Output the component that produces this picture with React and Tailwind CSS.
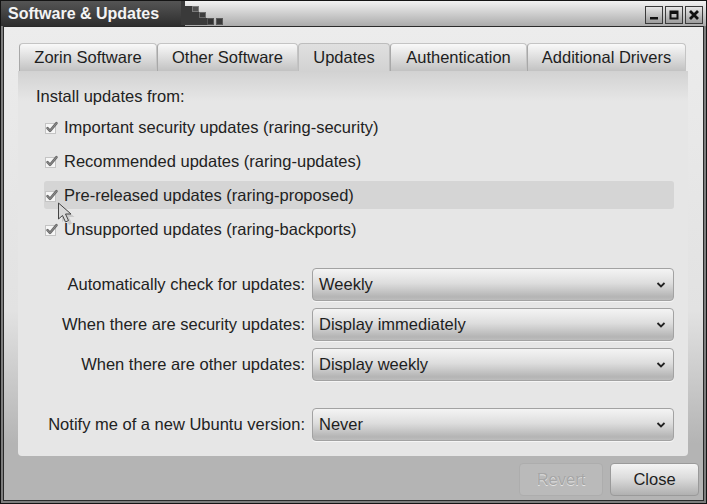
import { useState } from 'react'

const tabs = [
  { label: 'Zorin Software', w: 'w-[138px]' },
  { label: 'Other Software', w: 'w-[141px]' },
  { label: 'Updates', w: 'w-[92px]', active: true },
  { label: 'Authentication', w: 'w-[137px]' },
  { label: 'Additional Drivers', w: 'w-[159px]' },
]

const sources = [
  'Important security updates (raring-security)',
  'Recommended updates (raring-updates)',
  'Pre-released updates (raring-proposed)',
  'Unsupported updates (raring-backports)',
]

function Check() {
  return (
    <svg width="16" height="14" viewBox="0 0 16 14" className="shrink-0">
      <rect x="1.5" y="3.5" width="10" height="10" fill="#f6f6f6" stroke="#c4c4c4" />
      <path d="M3.5 8.2 L6 10.8 L12.5 3.2" fill="none" stroke="#6a6a6a" strokeWidth="2.6" strokeLinecap="round" strokeLinejoin="round" />
      <path d="M3.5 8.2 L6 10.8 L12.5 3.2" fill="none" stroke="#8e8e8e" strokeWidth="1" strokeLinecap="round" strokeLinejoin="round" />
    </svg>
  )
}

function Combo({ value }) {
  return (
    <div className="flex-1 h-[33px] rounded-[4px] border border-[#a2a2a2] bg-[linear-gradient(to_bottom,#f4f4f4_0%,#dedede_45%,#b4b4b4_90%,#bdbdbd_100%)] shadow-[0_1px_0_rgba(255,255,255,0.6)] flex items-center justify-between pl-[6px] pr-[7px] text-[#1e1e1e]">
      <span>{value}</span>
      <svg width="10" height="8" viewBox="0 0 10 8">
        <path d="M1.5 2 L5 5.5 L8.5 2" fill="none" stroke="#222" strokeWidth="1.8" />
      </svg>
    </div>
  )
}

function WinButton({ children }) {
  return (
    <div className="w-[18px] h-[18px] border border-[#3a3a3a] bg-[linear-gradient(to_bottom,#e6e6e6,#9c9c9c)] flex items-center justify-center">
      <svg width="12" height="12" viewBox="0 0 12 12">{children}</svg>
    </div>
  )
}

export default function App() {
  const [checked] = useState([true, true, true, true])
  const [tab] = useState(2)

  return (
    <div className="w-[707px] h-[504px] bg-[#141414] p-px flex flex-col font-['Liberation_Sans',Arial,sans-serif] text-[16.5px] text-[#222] select-none">
      {/* title bar */}
      <div className="h-[25px] relative flex items-center bg-[linear-gradient(to_bottom,#f2f2f2,#ababab)]">
        <div className="absolute left-0 top-0 bottom-0 w-[184px] bg-[linear-gradient(to_bottom,#555,#2e2e2e)]" />
        <svg className="absolute left-[180px] top-0" width="48" height="25" viewBox="0 0 48 25">
          <path d="M0 0 H4 V5 H11 V11 H18 V17 H26 V24 H0 Z" fill="#3a3a3a" />
          <rect x="11" y="5" width="7" height="6" fill="#7a7a7a" />
          <rect x="12" y="6" width="5" height="4" fill="#505050" />
          <rect x="18" y="11" width="7" height="6" fill="#6a6a6a" />
          <rect x="19" y="12" width="5" height="4" fill="#3c3c3c" />
          <rect x="26" y="17" width="7" height="7" fill="#555" />
          <rect x="27" y="18" width="5" height="5" fill="#333" />
          <rect x="35" y="17" width="7" height="7" fill="#5a5a5a" />
          <rect x="36" y="18" width="5" height="5" fill="#3a3a3a" />
        </svg>
        <span className="relative pl-[7px] font-bold text-[16px] text-[#f4f4f4]">Software &amp; Updates</span>
        <div className="ml-auto relative flex gap-[2px] pr-[3px] pt-[2px]">
          <WinButton>
            <rect x="2" y="8" width="8" height="2.5" fill="#111" />
          </WinButton>
          <WinButton>
            <rect x="2.5" y="2.5" width="7" height="7" fill="none" stroke="#111" strokeWidth="2" />
            <rect x="2" y="2" width="8" height="3" fill="#111" />
          </WinButton>
          <WinButton>
            <path d="M2 2 L10 10 M10 2 L2 10" stroke="#111" strokeWidth="2.8" />
          </WinButton>
        </div>
      </div>

      {/* window body */}
      <div className="flex-1 bg-[#7d7d7d] px-[2px] pb-[2px] flex flex-col">
        <div className="flex-1 border border-[#2a2a2a] bg-[linear-gradient(to_bottom,#ececec_0%,#e2e2e2_60%,#b4b4b4_88%,#b4b4b4_100%)] flex flex-col pt-[16px] pl-[14px] pr-[3px] pb-[3px]">
          {/* tabs */}
          <div className="flex h-[28px] pl-px">
            {tabs.map((t, i) => (
              <div
                key={t.label}
                className={`${t.w} h-full flex items-center justify-center pb-px rounded-t-[4px] border border-b-0 ${
                  i === tab
                    ? 'bg-[linear-gradient(to_bottom,#e0e0e0,#d2d2d2)] border-[#bdbdbd]'
                    : 'bg-[linear-gradient(to_bottom,#f9f9f9,#c2c2c2)] border-[#c4c4c4] border-l-[#a8a8a8]'
                } text-[#1e1e1e]`}
              >
                {t.label}
              </div>
            ))}
          </div>

          {/* panel */}
          <div className="w-[670px] h-[385px] rounded-b-[4px] bg-[linear-gradient(to_bottom,#d2d2d2_0px,#e6e6e6_30px,#e6e6e6_100%)] pt-[15px] pl-[18px] pr-[14px] flex flex-col">
            <div className="h-[20px] leading-[20px] text-[#222]">Install updates from:</div>
            <div className="flex flex-col gap-[6px] mt-[7px] ml-[8px]">
              {sources.map((s, i) => (
                <div
                  key={s}
                  className={`h-[28px] flex items-center gap-[4px] rounded-[3px] relative ${i === 2 ? 'bg-[#d5d5d5]' : ''}`}
                >
                  {checked[i] && <Check />}
                  <span>{s}</span>
                  {i === 2 && (
                    <svg className="absolute left-[13px] top-[21px]" width="20" height="24" viewBox="0 0 20 24">
                      <path d="M3 2 L3 18 L7 14.5 L10 21 L13 19.5 L10 13 L15.5 13 Z" fill="rgba(0,0,0,0.12)" transform="translate(2 2)" />
                      <path d="M1.5 1 L1.5 17 L5.5 13.5 L8.5 20 L11.5 18.5 L8.5 12 L14 12 Z" fill="#d8d8d8" stroke="#444" strokeWidth="1" strokeLinejoin="round" />
                    </svg>
                  )}
                </div>
              ))}
            </div>

            <div className="flex flex-col gap-[7px] mt-[25px]">
              {[
                ['Automatically check for updates:', 'Weekly'],
                ['When there are security updates:', 'Display immediately'],
                ['When there are other updates:', 'Display weekly'],
              ].map(([l, v]) => (
                <div key={l} className="flex items-center gap-[7px]">
                  <div className="w-[269px] text-right">{l}</div>
                  <Combo value={v} />
                </div>
              ))}
            </div>
            <div className="flex items-center gap-[7px] mt-[27px]">
              <div className="w-[269px] text-right">Notify me of a new Ubuntu version:</div>
              <Combo value="Never" />
            </div>
          </div>

          {/* action buttons */}
          <div className="flex justify-end gap-[7px] mt-[7px] h-[33px] pr-px">
            <div className="w-[84px] h-full rounded-[4px] border border-[#adadad] bg-[#bababa] flex items-center justify-center text-[#a6a6a6] [text-shadow:0_1px_0_#e4e4e4]">
              Revert
            </div>
            <div className="w-[89px] h-full rounded-[4px] border border-[#9a9a9a] bg-[linear-gradient(to_bottom,#f4f4f4,#dcdcdc_45%,#b0b0b0)] flex items-center justify-center text-[#1e1e1e]">
              Close
            </div>
          </div>
        </div>
      </div>
    </div>
  )
}
